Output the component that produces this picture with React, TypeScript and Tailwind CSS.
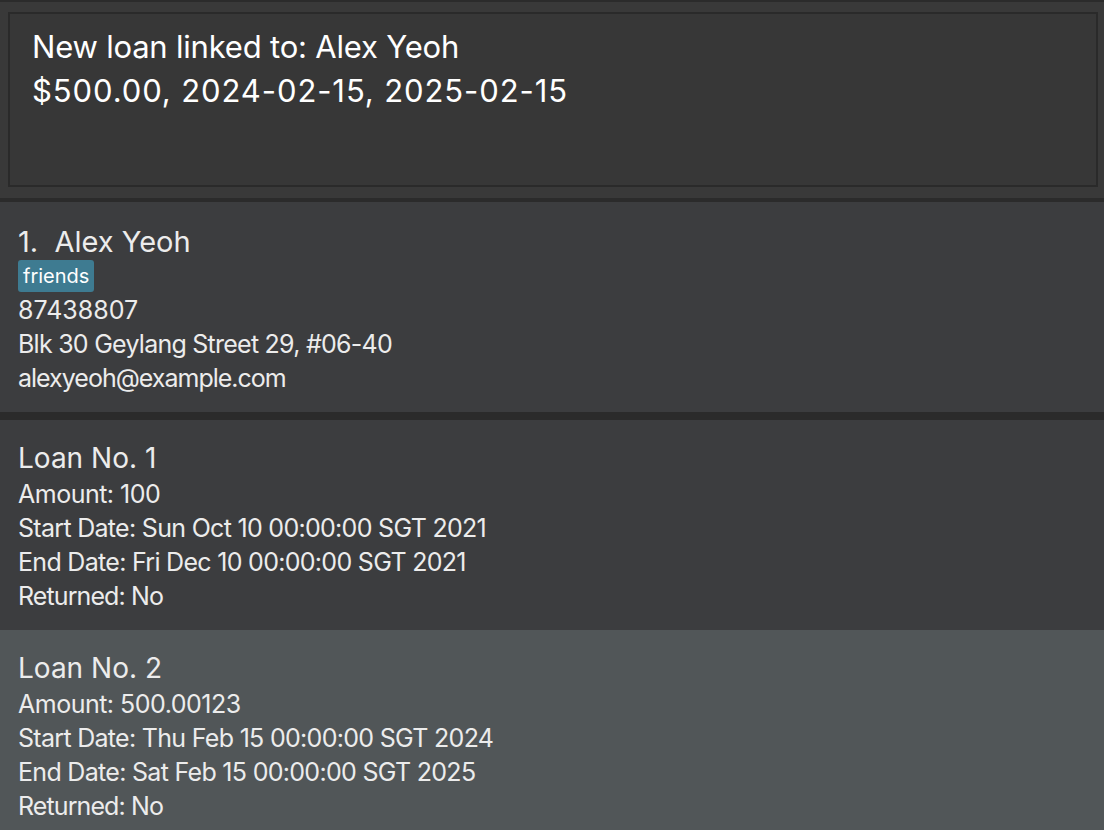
import React from "react";

const font = { fontFamily: "Inter, 'Noto Sans', sans-serif" };

function LoanCard({ no, amount, start, end, returned, selected }: { no: number; amount: string; start: string; end: string; returned: string; selected?: boolean }) {
  return (
    <div className={`${selected ? "bg-[#515658]" : "bg-[#3c3d3f]"} shrink-0 pl-[18px] pt-[20px] pb-[17px] text-[#ececec]`}>
      <div className="text-[28px] leading-[36px]">Loan No. {no}</div>
      <div className="mt-[1px] text-[25px] leading-[34px] tracking-[-0.7px]">
        <div className="tracking-[-0.5px]">Amount: {amount}</div>
        <div>Start Date: {start}</div>
        <div>End Date: {end}</div>
        <div className="tracking-[-0.9px]">Returned: {returned}</div>
      </div>
    </div>
  );
}

export default function App() {
  return (
    <div className="w-[1104px] h-[830px] overflow-hidden bg-[#2b2b2b] pt-[2px] flex flex-col" style={font}>
      <div className="shrink-0 bg-[#393939] pl-[8px] pr-[6px] pt-[10px] pb-[11px]">
        <div className="h-[175px] border-2 border-[#2a2a2a] bg-[#373737] pl-[22px] pt-[11px] text-white text-[31px] leading-[44px]">
          <div className="tracking-[-0.2px]">New loan linked to: Alex Yeoh</div>
          <div className="tracking-[0.9px]">$500.00, 2024-02-15, 2025-02-15</div>
        </div>
      </div>
      <div className="shrink-0 h-[4px] bg-[#2b2b2b]" />
      <div className="shrink-0 bg-[#3c3d3f] pl-[18px] pt-[22px] pb-[17px] text-[#ececec]">
        <div className="text-[29px] leading-[36px]">1.&nbsp;&nbsp;Alex Yeoh</div>
        <div className="flex">
          <span className="h-[32px] px-[5px] rounded-[3px] bg-[#3e7b91] text-white text-[20px] leading-[32px]">friends</span>
        </div>
        <div className="mt-[1px] text-[25px] leading-[34px]">
          <div>87438807</div>
          <div className="tracking-[-0.75px]">Blk 30 Geylang Street 29, #06-40</div>
          <div className="tracking-[-1px]">alexyeoh@example.com</div>
        </div>
      </div>
      <div className="shrink-0 h-[8px] bg-[#2b2b2b]" />
      <LoanCard no={1} amount="100" start="Sun Oct 10 00:00:00 SGT 2021" end="Fri Dec 10 00:00:00 SGT 2021" returned="No" />
      <LoanCard no={2} amount="500.00123" start="Thu Feb 15 00:00:00 SGT 2024" end="Sat Feb 15 00:00:00 SGT 2025" returned="No" selected />
      <div className="flex-1 bg-[#515658]" />
    </div>
  );
}
